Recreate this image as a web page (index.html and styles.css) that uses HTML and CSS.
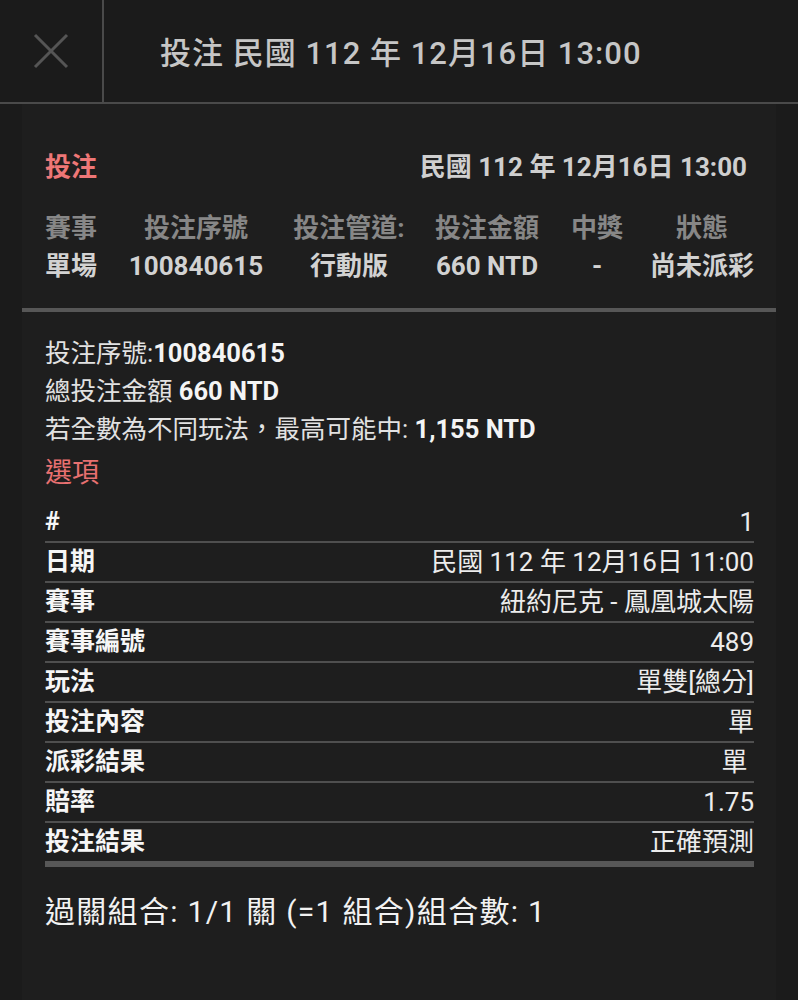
FILE: index.html
```html
<!DOCTYPE html>
<html lang="zh-Hant">
<head>
  <meta charset="UTF-8" />
  <title>投注</title>
  <link rel="stylesheet" href="styles.css">
</head>
<body>
  <div class="topbar">
    <div class="close">
      <svg width="36" height="36" viewBox="0 0 36 36">
        <path d="M2 2 L34 34 M34 2 L2 34" stroke="#555" stroke-width="3" fill="none" />
      </svg>
    </div>
    <div class="topbar-title">投注 民國 112 年 12月16日 13:00</div>
  </div>

  <div class="panel">
    <div class="bet-head">
      <span class="red-title">投注</span>
      <span class="bet-date">民國 112 年 12月16日 13:00</span>
    </div>

    <div class="summary">
      <div class="col col-a"><div class="th">賽事</div><div class="td">單場</div></div>
      <div class="col col-b"><div class="th">投注序號</div><div class="td">100840615</div></div>
      <div class="col col-c"><div class="th">投注管道:</div><div class="td">行動版</div></div>
      <div class="col col-d"><div class="th">投注金額</div><div class="td">660 NTD</div></div>
      <div class="col col-e"><div class="th">中獎</div><div class="td">-</div></div>
      <div class="col col-f"><div class="th">狀態</div><div class="td">尚未派彩</div></div>
    </div>

    <div class="info">
      <p>投注序號:<b>100840615</b></p>
      <p>總投注金額 <b>660 NTD</b></p>
      <p>若全數為不同玩法，最高可能中: <b>1,155 NTD</b></p>
    </div>

    <div class="red-sub">選項</div>

    <div class="details">
      <div class="row"><span class="label">#</span><span class="value">1</span></div>
      <div class="row"><span class="label">日期</span><span class="value">民國 112 年 12月16日 11:00</span></div>
      <div class="row"><span class="label">賽事</span><span class="value">紐約尼克 - 鳳凰城太陽</span></div>
      <div class="row"><span class="label">賽事編號</span><span class="value">489</span></div>
      <div class="row"><span class="label">玩法</span><span class="value">單雙[總分]</span></div>
      <div class="row"><span class="label">投注內容</span><span class="value">單</span></div>
      <div class="row"><span class="label">派彩結果</span><span class="value">單&nbsp;</span></div>
      <div class="row"><span class="label">賠率</span><span class="value">1.75</span></div>
      <div class="row last"><span class="label">投注結果</span><span class="value">正確預測</span></div>
    </div>

    <div class="combo">過關組合: 1/1 關 (=1 組合)組合數: 1</div>
  </div>
</body>
</html>
```

FILE: styles.css
```css
* {
  box-sizing: border-box;
  margin: 0;
  padding: 0;
}

body {
  background: #1b1b1b;
  color: #e6e6e6;
  font-family: Roboto, "Noto Sans CJK TC", sans-serif;
  width: 798px;
  height: 1000px;
  overflow: hidden;
}

/* barra superior */
.topbar {
  display: flex;
  height: 104px;
  border-bottom: 2px solid #4a4a4a;
}

.close {
  width: 104px;
  border-right: 2px solid #4a4a4a;
  display: flex;
  align-items: center;
  justify-content: center;
}

.topbar-title {
  padding-left: 56px;
  display: flex;
  align-items: center;
  font-size: 31px;
  font-weight: 500;
  letter-spacing: 1px;
  color: #c6c6c6;
  padding-bottom: 2px;
}

/* painel */
.panel {
  margin: 0 22px;
  background: #1e1e1e;
  padding: 43px 22px 40px 23px;
  height: 896px;
}

.bet-head {
  display: flex;
  justify-content: space-between;
  line-height: 40px;
  font-size: 26px;
  font-weight: bold;
  padding-right: 7px;
}

.red-title {
  color: #ee7777;
}

.bet-date {
  color: #cfcfcf;
}

.summary {
  display: flex;
  margin-top: 22px;
  font-size: 26px;
  font-weight: bold;
  padding-bottom: 23px;
  border-bottom: 4px solid #575757;
  margin-left: -23px;
  margin-right: -22px;
  padding-left: 23px;
  padding-right: 22px;
}

.col {
  text-align: center;
  line-height: 38px;
  white-space: nowrap;
}

.col-a { width: 70px; text-align: left; }
.col-b { width: 162px; }
.col-c { width: 144px; }
.col-d { width: 132px; }
.col-e { width: 88px; }
.col-f { width: 104px; margin-left: auto; }

.th {
  color: #878787;
}

.td {
  color: #d2d2d2;
}

.info {
  margin-top: 22px;
  font-size: 25.5px;
  line-height: 38px;
  color: #e2e2e2;
}

.info b {
  color: #f4f4f4;
}

.red-sub {
  color: #e77070;
  font-size: 27px;
  line-height: 40px;
  margin-top: 5px;
  margin-bottom: 10px;
}

.row {
  display: flex;
  justify-content: space-between;
  height: 40px;
  line-height: 38px;
  border-bottom: 2px solid #4f4f4f;
}

.row.last {
  height: 44px;
  border-bottom: 6px solid #575757;
}

.label {
  font-size: 25px;
  font-weight: bold;
  color: #f6f6f6;
}

.value {
  font-size: 26px;
  color: #ececec;
}

.combo {
  margin-top: 25px;
  line-height: 40px;
  font-size: 30px;
  letter-spacing: 1.3px;
  color: #f2f2f2;
}
```
